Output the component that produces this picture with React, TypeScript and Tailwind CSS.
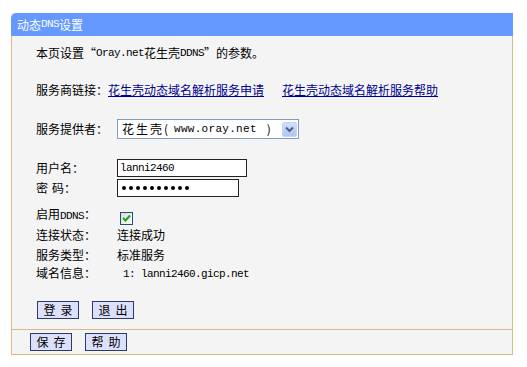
import React from "react";

const M = ({ children }: { children: React.ReactNode }) => (
  <span className="font-['Liberation_Mono',monospace] text-[11px] tracking-[-0.6px]">{children}</span>
);

const Btn = ({ a, b }: { a: string; b: string }) => (
  <div className="w-[42px] h-[18px] border border-[#2a3a6a] bg-[#dde0fa] flex items-center justify-center gap-[5px] leading-none text-[12px] text-black">
    <span>{a}</span>
    <span>{b}</span>
  </div>
);

export default function App() {
  return (
    <div className="w-[527px] h-[367px] bg-white pt-[13px] pl-[11px] font-['Noto_Sans_CJK_SC',sans-serif] text-[12px] text-black leading-none">
      <div className="w-[502px]">
        <div className="h-[23px] bg-[#6699ff] rounded-tl-[5px] text-white pl-[6px] flex items-center">
          动态<M>DNS</M>设置
        </div>
        <div className="border-x border-[#deb887] bg-[#f4f4f4] pl-[24px] pt-[8px] pb-[10px] flex flex-col">
          <div className="h-[18px] flex items-center whitespace-pre">
            <span>本页设置</span>
            <span className="w-[12px] flex justify-end">“</span>
            <M>Oray.net</M>
            <span>花生壳</span>
            <M>DDNS</M>
            <span className="w-[12px]">”</span>
            <span>的参数。</span>
          </div>
          <div className="mt-[19px] h-[18px] flex items-center">
            <span>服务商链接：</span>
            <span className="underline text-[#000090]">花生壳动态域名解析服务申请</span>
            <span className="underline text-[#000090] ml-[18px]">花生壳动态域名解析服务帮助</span>
          </div>
          <div className="mt-[20px] h-[20px] flex items-center">
            <span className="w-[81px]">服务提供者：</span>
            <div className="w-[182px] h-[20px] border border-[#7f9db9] bg-white flex items-center pl-[4px] pr-[1px]">
              <div className="flex-1 flex items-center whitespace-pre">
                <span className="w-[14px] shrink-0">花</span>
                <span className="w-[14px] shrink-0">生</span>
                <span className="w-[14px] shrink-0">壳</span>
                <span className="w-[10px] shrink-0">(</span>
                <span className="shrink-0 font-['Liberation_Mono',monospace] text-[11px] tracking-[0.3px]">www.oray.net</span>
                <span className="ml-[10px] shrink-0">)</span>
              </div>
              <div className="w-[15px] h-[15px] shrink-0 rounded-[2px] bg-gradient-to-b from-[#d0defc] to-[#aec6f6] border border-[#c3d3f5] flex items-center justify-center">
                <svg width="9" height="7" viewBox="0 0 9 7">
                  <path d="M1 1.5 L4.5 5 L8 1.5" stroke="#4d6185" strokeWidth="2" fill="none" />
                </svg>
              </div>
            </div>
          </div>
          <div className="mt-[20px] h-[18px] flex items-center">
            <span className="w-[81px]">用户名：</span>
            <div className="w-[130px] h-[18px] border border-[#222] bg-white flex items-center pl-[2px] text-black">
              <M>lanni2460</M>
            </div>
          </div>
          <div className="mt-[2px] h-[18px] flex items-center">
            <span className="w-[81px] flex">
              <span>密</span>
              <span className="ml-[4px]">码：</span>
            </span>
            <div className="w-[122px] h-[18px] border border-[#222] bg-white flex items-center pl-[4px] gap-[3px]">
              {Array.from({ length: 10 }).map((_, i) => (
                <span key={i} className="w-[4px] h-[4px] rounded-full bg-black" />
              ))}
            </div>
          </div>
          <div className="mt-[8px] h-[20px] flex items-center">
            <span className="w-[81px]">启用<M>DDNS</M>：</span>
            <div className="ml-[3px] mt-[6px] w-[13px] h-[13px] border border-[#1c5180] bg-gradient-to-br from-[#dcdcd6] to-[#fbfbf9] flex items-center justify-center">
              <svg width="9" height="8" viewBox="0 0 9 8">
                <path d="M1 4 L3.5 6.5 L8 1.5" stroke="#21a121" strokeWidth="2" fill="none" />
              </svg>
            </div>
          </div>
          <div className="h-[20px] flex items-center">
            <span className="w-[81px]">连接状态：</span>
            <span>连接成功</span>
          </div>
          <div className="h-[20px] flex items-center">
            <span className="w-[81px]">服务类型：</span>
            <span>标准服务</span>
          </div>
          <div className="h-[16px] flex items-center">
            <span className="w-[81px]">域名信息：</span>
            <span className="ml-[6px] whitespace-pre"><M>1: lanni2460.gicp.net</M></span>
          </div>
          <div className="mt-[20px] flex gap-[13px] ml-[1px]">
            <Btn a="登" b="录" />
            <Btn a="退" b="出" />
          </div>
        </div>
        <div className="border border-[#deb887] bg-[#f4f4f4] pl-[18px] py-[3px] flex gap-[13px]">
          <Btn a="保" b="存" />
          <Btn a="帮" b="助" />
        </div>
      </div>
    </div>
  );
}
